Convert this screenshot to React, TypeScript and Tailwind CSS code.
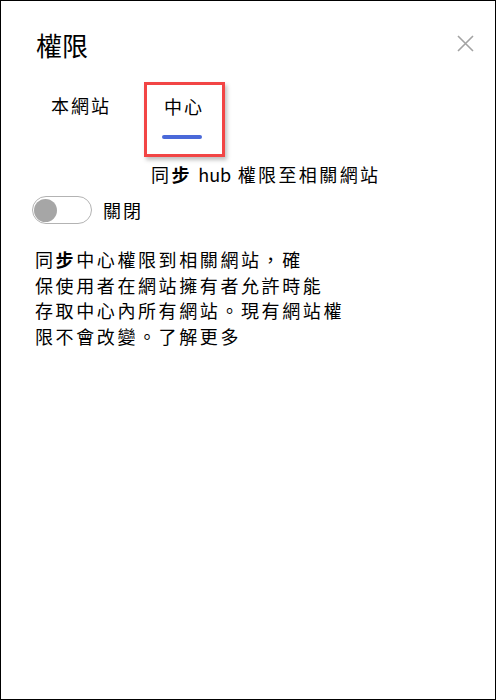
import { useState } from 'react';

const cjk = { fontFamily: '"Noto Sans CJK TC", "Noto Sans", sans-serif' };

export default function App() {
  const [hubSync, setHubSync] = useState(false);

  return (
    <div className="w-[496px] h-[700px] border border-black bg-white text-black" style={cjk}>
      <div className="flex items-start justify-between pt-[28px] pl-[35px] pr-[21px]">
        <h1 className="text-[26px] leading-[32px] font-normal">權限</h1>
        <button className="mt-[6px] text-[#a3a3a3]" aria-label="關閉">
          <svg width="17" height="17" viewBox="0 0 17 17" fill="none" stroke="currentColor" strokeWidth="1.6">
            <path d="M1 1 L16 16 M16 1 L1 16" />
          </svg>
        </button>
      </div>

      <div className="flex items-start mt-[21px] pl-[50px]">
        <div className="w-[93px] mt-[11px] text-[18px] leading-[24px] tracking-[2px]">本網站</div>
        <div className="w-[81px] h-[75px] border-[3px] border-[#f24545] shadow-[2px_3px_4px_rgba(0,0,0,0.25)] pt-[9px]">
          <div className="pl-[17px] text-[18px] leading-[24px] tracking-[2px]">中心</div>
          <div className="ml-[15px] mt-[17px] w-[40px] h-[4px] rounded-full bg-[#4a69d9]" />
        </div>
      </div>

      <p className="mt-[5px] pl-[150px] text-[18px] leading-[24px] tracking-[2.4px]">
        同<b>步</b> <span className="tracking-normal">hub</span> 權限至相關網站
      </p>

      <div className="flex items-center mt-[10px] pl-[31px] gap-[11px]">
        <button
          onClick={() => setHubSync(!hubSync)}
          className={`w-[60px] h-[28px] rounded-full border-[1.5px] flex items-center px-[1px] ${
            hubSync ? 'border-[#4a69d9] bg-[#4a69d9] justify-end' : 'border-[#b3b3b3] bg-white justify-start'
          }`}
        >
          <span className={`w-[23px] h-[23px] rounded-full ${hubSync ? 'bg-white' : 'bg-[#a6a6a6]'}`} />
        </button>
        <span className="text-[18px] leading-[24px] tracking-[2px]">{hubSync ? '開啟' : '關閉'}</span>
      </div>

      <p className="mt-[23px] pl-[34px] text-[18px] leading-[25.5px] tracking-[2.6px]">
        同<b>步</b>中心權限到相關網站，確
        <br />
        保使用者在網站擁有者允許時能
        <br />
        存取中心內所有網站。現有網站權
        <br />
        限不會改變。了解更多
      </p>
    </div>
  );
}
